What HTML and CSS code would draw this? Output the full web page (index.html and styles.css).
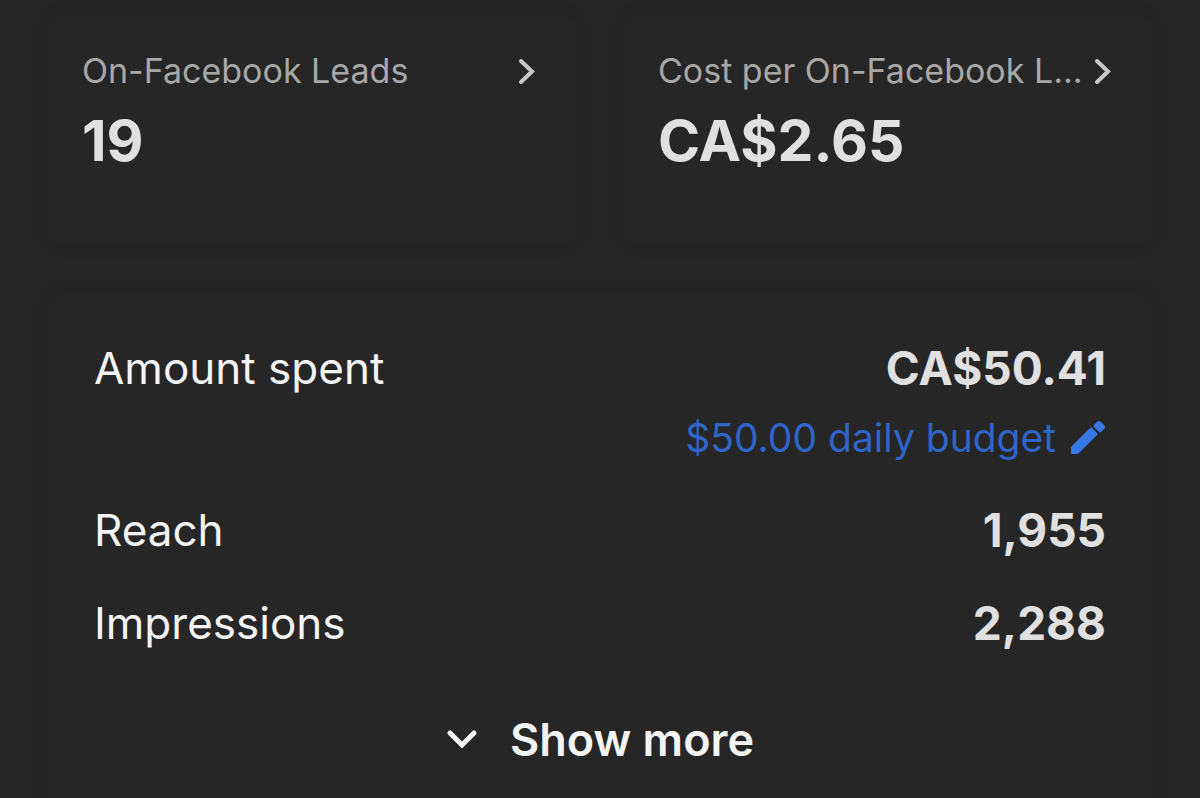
FILE: index.html
```
<!DOCTYPE html>
<html lang="en">

<head>
    <meta charset="UTF-8">
    <meta name="viewport" content="width=device-width, initial-scale=1.0">
    <title>Ad Performance</title>
    <link rel="stylesheet" href="styles.css">
</head>

<body>

    <main class="container">
        <div class="metrics">
            <section class="card metric">
                <a class="metric-link" href="#leads">
                    <span class="metric-label">On-Facebook Leads</span>
                    <svg class="chevron" viewBox="0 0 18 28" aria-hidden="true">
                        <path d="M3 4l11 10.500L3 25" />
                    </svg>
                </a>
                <p class="metric-value">19</p>
            </section>
            <section class="card metric">
                <a class="metric-link" href="#cost">
                    <span class="metric-label">Cost per On-Facebook L...</span>
                    <svg class="chevron" viewBox="0 0 18 28" aria-hidden="true">
                        <path d="M3 4l11 10.500L3 25" />
                    </svg>
                </a>
                <p class="metric-value">CA$2.65</p>
            </section>
        </div>

        <section class="card summary">
            <dl class="stats">
                <div class="row">
                    <dt>Amount spent</dt>
                    <dd>CA$50.41</dd>
                </div>
                <div class="row budget-row">
                    <dd>
                        <a class="budget" href="#budget">
                            $50.00 daily budget
                            <svg class="pencil" viewBox="0 0 36 36" aria-hidden="true">
                                <path d="M1 34v-6q0-1 1-2L20 8q1-1 2 0l5 5q1 1 0 2L9 33q-1 1-2 1z" />
                                <path d="M24 5l3-3q2-2 4 0l3 3q2 2 0 4l-3 3q-1 1-2 0l-5-5q-1-1 0-2z" />
                            </svg>
                        </a>
                    </dd>
                </div>
                <div class="row">
                    <dt>Reach</dt>
                    <dd>1,955</dd>
                </div>
                <div class="row">
                    <dt>Impressions</dt>
                    <dd>2,288</dd>
                </div>
            </dl>
            <button class="show-more" type="button">
                <svg class="chevron-down" viewBox="0 0 32 22" aria-hidden="true">
                    <path d="M4 4l12 12L28 4" />
                </svg>
                Show more
            </button>
        </section>
    </main>

</body>

</html>
```
FILE: styles.css
```
* {
    margin: 0;
    padding: 0;
    box-sizing: border-box;
}

body {
    min-height: 100vh;
    background: #262626;
    color: #e0e0e0;
    font-family: Inter, "Liberation Sans", sans-serif;
}

.container {
    padding: 14px 48px 0;
}

.card {
    background: #262626;
    border-radius: 12px;
    box-shadow: 0 0 16px rgba(0, 0, 0, 0.1);
}

.metrics {
    display: grid;
    grid-template-columns: 1fr 1fr;
    gap: 48px;
    margin-bottom: 48px;
}

.metric {
    min-width: 0;
    padding: 35px 40px 70px 34px;
}

.metric-link {
    display: flex;
    align-items: center;
    justify-content: space-between;
    color: #a8a8a8;
    font-size: 34px;
    line-height: 44px;
    text-decoration: none;
    white-space: nowrap;
}

.chevron {
    flex: none;
    width: 18px;
    height: 28px;
    fill: none;
    stroke: #c8c8c8;
    stroke-width: 4;
    stroke-linecap: round;
}

.metric-value {
    margin-top: 14px;
    font-size: 57px;
    font-weight: 700;
    line-height: 68px;
}

.summary {
    padding: 47px 46px 40px;
}

.row {
    display: flex;
    justify-content: space-between;
    margin-bottom: 36px;
    font-size: 46px;
    line-height: 57px;
}

.row dt {
    color: #f4f4f4;
    font-size: 44px;
}

.row dd {
    font-weight: 700;
}

.budget-row {
    justify-content: flex-end;
    margin-top: -24px;
}

.budget {
    display: flex;
    align-items: center;
    gap: 14px;
    color: #2f64c8;
    font-size: 39px;
    font-weight: 400;
    text-decoration: none;
}

.pencil {
    width: 36px;
    height: 36px;
    fill: #3578e8;
}

.show-more {
    display: flex;
    align-items: center;
    justify-content: center;
    gap: 32px;
    width: 100%;
    margin-top: 59px;
    border: 0;
    background: none;
    color: #f4f4f4;
    font: 600 45px/57px Inter, "Liberation Sans", sans-serif;
    cursor: pointer;
}

.chevron-down {
    width: 32px;
    height: 22px;
    fill: none;
    stroke: #f4f4f4;
    stroke-width: 5;
    stroke-linecap: round;
}
```
